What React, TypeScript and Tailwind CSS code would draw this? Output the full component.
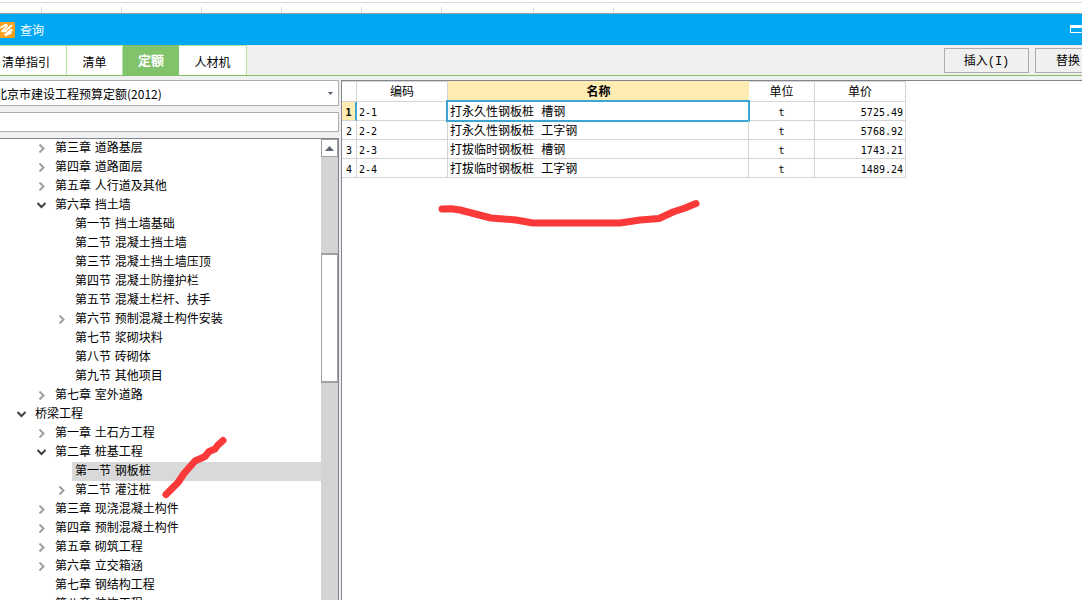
import React from 'react';

const uiFont = 'font-["DejaVu_Sans","Noto_Sans_CJK_SC",sans-serif]';
const cjkFont = 'font-["Noto_Sans_CJK_SC",sans-serif]';
const nameFont = 'font-["Liberation_Mono","Noto_Sans_CJK_SC",monospace]';
const numFont = 'font-["DejaVu_Sans_Mono",monospace] text-[10px]';

type Node = { level: 0 | 1 | 2; label: string; state?: 'open' | 'closed'; selected?: boolean };

const nodes: Node[] = [
  { level: 1, label: '第三章 道路基层', state: 'closed' },
  { level: 1, label: '第四章 道路面层', state: 'closed' },
  { level: 1, label: '第五章 人行道及其他', state: 'closed' },
  { level: 1, label: '第六章 挡土墙', state: 'open' },
  { level: 2, label: '第一节 挡土墙基础' },
  { level: 2, label: '第二节 混凝土挡土墙' },
  { level: 2, label: '第三节 混凝土挡土墙压顶' },
  { level: 2, label: '第四节 混凝土防撞护栏' },
  { level: 2, label: '第五节 混凝土栏杆、扶手' },
  { level: 2, label: '第六节 预制混凝土构件安装', state: 'closed' },
  { level: 2, label: '第七节 浆砌块料' },
  { level: 2, label: '第八节 砖砌体' },
  { level: 2, label: '第九节 其他项目' },
  { level: 1, label: '第七章 室外道路', state: 'closed' },
  { level: 0, label: '桥梁工程', state: 'open' },
  { level: 1, label: '第一章 土石方工程', state: 'closed' },
  { level: 1, label: '第二章 桩基工程', state: 'open' },
  { level: 2, label: '第一节 钢板桩', selected: true },
  { level: 2, label: '第二节 灌注桩', state: 'closed' },
  { level: 1, label: '第三章 现浇混凝土构件', state: 'closed' },
  { level: 1, label: '第四章 预制混凝土构件', state: 'closed' },
  { level: 1, label: '第五章 砌筑工程', state: 'closed' },
  { level: 1, label: '第六章 立交箱涵', state: 'closed' },
  { level: 1, label: '第七章 钢结构工程' },
  { level: 1, label: '第八章 装饰工程' },
];

const indent = { 0: 'pl-3', 1: 'pl-8', 2: 'pl-[52px]' };

const rows = [
  { code: '2-1', name: '打永久性钢板桩 槽钢', unit: 't', price: '5725.49' },
  { code: '2-2', name: '打永久性钢板桩 工字钢', unit: 't', price: '5768.92' },
  { code: '2-3', name: '打拔临时钢板桩 槽钢', unit: 't', price: '1743.21' },
  { code: '2-4', name: '打拔临时钢板桩 工字钢', unit: 't', price: '1489.24' },
];

function Chevron({ open }: { open: boolean }) {
  return (
    <svg viewBox="0 0 10 9" className="h-[9px] w-2.5" fill="none" strokeWidth="2" aria-hidden="true">
      {open ? <path d="M.5 2l4 4 4-4" stroke="#404040" /> : <path d="M2.500.5l4 4-4 4" stroke="#a0a0a0" />}
    </svg>
  );
}

function SheetEdge() {
  return (
    <div className="h-[14px] shrink-0 border-b border-[#a0a0a0] bg-white pt-0.5">
      <div className="flex h-[11px] items-end border-t border-[#dcdcdc]">
        <span className="h-1.5 w-[42px] border-r border-[#dcdcdc]" />
        <span className="h-1.5 w-20 border-r border-[#dcdcdc]" />
        <span className="h-1.5 w-20 border-r border-[#dcdcdc]" />
        <span className="h-1.5 w-20 border-r border-[#dcdcdc]" />
        <span className="h-1.5 w-20 border-r border-[#dcdcdc]" />
        <span className="h-1.5 w-20 border-r border-[#dcdcdc]" />
        <span className="h-1.5 w-[92px] border-r border-[#dcdcdc]" />
        <span className="h-1.5 w-20 border-r border-[#dcdcdc]" />
      </div>
    </div>
  );
}

function TitleBar() {
  return (
    <header className="flex h-[31px] shrink-0 items-center overflow-hidden bg-[#00a8f3] text-white">
      <svg viewBox="0 0 15 16" className="h-4 w-[15px] shrink-0" fill="none" aria-hidden="true">
        <rect x="-3" width="18" height="16" rx="2" fill="#f9a11b" />
        <g stroke="#fff" strokeLinecap="round" strokeLinejoin="round">
          <path d="M1 5.500l5-3 1 1.500-4.500 5M11.500 3.500L6.500 8" strokeWidth="1.800" />
          <path d="M2.500 9h3M11.500 8l-6 5 5-2" strokeWidth="2.400" />
        </g>
      </svg>
      <h1 className={`${cjkFont} ml-[5px] text-xs`}>查询</h1>
      <button aria-label="最大化" className="mb-0.5 -mr-px ml-auto h-2 w-[13px] border border-t-[3px] border-white" />
    </header>
  );
}

function Toolbar() {
  const tab = 'h-full border-r border-t border-[#b5e3a0] bg-white';
  const action = 'h-[25px] w-[85px] shrink-0 border border-[#adadad] bg-[#f0f0f0] pt-1';
  return (
    <div className={`${cjkFont} flex h-[31px] shrink-0 items-center overflow-hidden border-b border-b-[#7fc169] bg-[#f0f0f0] text-xs`}>
      <nav className="flex h-full">
        <button className={`${tab} w-[67px] pl-0.5 pt-0.5 text-left`}>清单指引</button>
        <button className={`${tab} w-14 pt-0.5`}>清单</button>
        <button className="h-full w-14 bg-[#81c36a] text-[13px] font-bold text-white">定额</button>
        <button className={`${tab} w-[68px] pt-0.5`}>人材机</button>
      </nav>
      <div className={`${nameFont} ml-auto -mr-[38px] flex gap-1.5`}>
        <button className={action}>插入(I)</button>
        <button className={`${action} pl-5 text-left`}>替换</button>
      </div>
    </div>
  );
}

function Sidebar() {
  return (
    <aside className="flex w-[339px] shrink-0 flex-col">
      <div className="relative h-[26px] shrink-0 overflow-hidden border border-l-0 border-[#adadad] bg-white">
        <select aria-label="定额库" className={`${cjkFont} -ml-[5px] h-full w-full appearance-none bg-white pb-0.5 text-xs`}>
          <option>北京市建设工程预算定额(2012)</option>
        </select>
        <svg viewBox="0 0 5 3" className="pointer-events-none absolute right-[5px] top-[11px] h-[3px] w-[5px]" aria-hidden="true">
          <path d="M0 0h5L2.500 3z" fill="#5f6377" />
        </svg>
      </div>
      <input aria-label="搜索" className="mt-1.5 h-5 w-full shrink-0 border border-l-0 border-[#adadad] bg-white px-1 text-xs outline-none" />
      <div className="mt-1.5 flex min-h-0 flex-1 border-r border-t border-[#82858f] bg-white">
        <ul role="tree" className={`${uiFont} min-w-0 flex-1 overflow-hidden text-xs`}>
          {nodes.map((n) => (
            <li key={n.level + n.label + (n.state ?? '')} role="treeitem" aria-selected={!!n.selected} className={`flex h-[19px] ${indent[n.level]}`}>
              <span className="flex w-5 items-center justify-center">{n.state && <Chevron open={n.state === 'open'} />}</span>
              <span className={`flex-1 whitespace-nowrap pl-[3px] leading-[19px] ${n.selected ? 'bg-[#d9d9d9]' : ''}`}>{n.label}</span>
            </li>
          ))}
        </ul>
        <div className="flex w-[17px] shrink-0 flex-col bg-[#d4d4d4]">
          <button aria-label="向上滚动" className="flex h-[18px] items-center justify-center border border-[#a0a0a0] bg-white">
            <svg viewBox="0 0 9 5" className="h-[5px] w-[9px]" aria-hidden="true">
              <path d="M0 5h9L4.500 0z" fill="#5f6377" />
            </svg>
          </button>
          <div className="mt-24 h-[130px] border border-y-2 border-[#a0a0a0] bg-white" />
        </div>
      </div>
    </aside>
  );
}

function Results() {
  const line = 'border-b border-r border-[#d4d4d4]';
  const head = 'p-0 pt-1 leading-[15px]';
  const cell = 'p-0 pt-1 leading-[14px]';
  return (
    <main className="ml-0.5 min-w-0 flex-1 border-l border-t border-[#82858f] bg-white">
      <table className={`${nameFont} w-[564px] table-fixed border-separate border-spacing-0 text-xs`}>
        <colgroup>
          <col className="w-[15px]" />
          <col className="w-[91px]" />
          <col className="w-[301px]" />
          <col className="w-[66px]" />
          <col className="w-[91px]" />
        </colgroup>
        <thead>
          <tr className="h-[21px]">
            <th className={`${line} ${head} border-t`} aria-label="序号" />
            <th className={`${line} ${head} border-t font-normal`}>编码</th>
            <th className={`${head} bg-[#ffecb3] font-bold`}>名称</th>
            <th className={`${line} ${head} border-t font-normal`}>单位</th>
            <th className={`${line} ${head} border-t font-normal`}>单价</th>
          </tr>
        </thead>
        <tbody>
          {rows.map((r, i) => (
            <tr key={r.code} className="h-[19px]">
              <td className={`${numFont} ${cell} text-center ${i === 0 ? 'border-b border-r-2 border-b-[#d4d4d4] border-r-[#3ca6d0] bg-[#ffecb3] font-bold' : line}`}>{i + 1}</td>
              <td className={`${line} ${numFont} ${cell} pl-0.5`}>{r.code}</td>
              <td className={`${line} ${cell} relative whitespace-nowrap pl-0.5`}>
                {r.name}
                {i === 0 && <span className="pointer-events-none absolute -inset-0.5 border-2 border-[#3ca6d0]" />}
              </td>
              <td className={`${line} ${numFont} ${cell} text-center`}>{r.unit}</td>
              <td className={`${line} ${numFont} ${cell} pr-0.5 text-right`}>{r.price}</td>
            </tr>
          ))}
        </tbody>
      </table>
    </main>
  );
}

function Annotations() {
  return (
    <svg viewBox="0 0 1082 600" className="pointer-events-none absolute left-0 top-0 h-[600px] w-[1082px]" fill="none" stroke="#fb3938" strokeWidth="7" strokeLinecap="round" strokeLinejoin="round" aria-hidden="true">
      <path d="M442 209l9-.3 9 1.300 31 8 25 2 17 3h87l20-3 19-1.500 14-6.500 12-4 11-4.500" />
      <path d="M166 494.500l12-12 6-9 11-12.500 10-4.500 4-5 6-2.500 3-4 5-4.500" />
    </svg>
  );
}

export default function App() {
  return (
    <div className="relative flex h-screen flex-col overflow-hidden bg-[#f0f0f0] text-black">
      <SheetEdge />
      <TitleBar />
      <Toolbar />
      <div className="flex min-h-0 flex-1 pt-1">
        <Sidebar />
        <Results />
      </div>
      <Annotations />
    </div>
  );
}
